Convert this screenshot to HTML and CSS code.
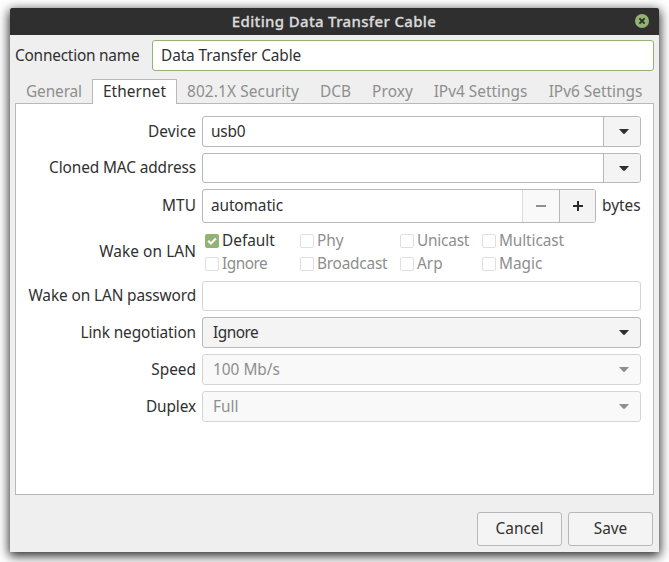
FILE: index.html
```html
<!DOCTYPE html>
<html lang="en">
<head>
<meta charset="utf-8">
<title>Editing Data Transfer Cable</title>
<link rel="stylesheet" href="styles.css">
</head>
<body>
<main class="window">
  <header class="titlebar">
    <h1 class="title">Editing Data Transfer Cable</h1>
    <svg class="close" width="14" height="14" viewBox="0 0 14 14"><circle cx="7" cy="7" r="7" fill="#92b372"/><path d="M4.4 4.4l5.2 5.2M9.6 4.4L4.4 9.6" stroke="#2f2f2f" stroke-width="1.9"/></svg>
  </header>
  <div class="name-row">
    <span class="name-label tighter">Connection name</span>
    <div class="box name-entry tight">Data Transfer Cable</div>
  </div>
  <nav class="tabs">
    <span class="tab first tight">General</span>
    <span class="tab active wide">Ethernet</span>
    <span class="tab security wider">802.1X Security</span>
    <span class="tab dcb">DCB</span>
    <span class="tab proxy wide">Proxy</span>
    <span class="tab ip">IPv4 Settings</span>
    <span class="tab ip">IPv6 Settings</span>
  </nav>
  <section class="panel">
    <div class="form">
      <span class="label wide">Device</span>
      <div class="box combo"><span class="value tighter">usb0</span><span class="drop"><svg width="10" height="5" viewBox="0 0 10 5"><path d="M0 0h10L6 4.5Q5 5.4 4 4.5z" fill="#2f2f2f"/></svg></span></div>
      <span class="label tight">Cloned MAC address</span>
      <div class="box combo"><span class="value"></span><span class="drop"><svg width="10" height="5" viewBox="0 0 10 5"><path d="M0 0h10L6 4.5Q5 5.4 4 4.5z" fill="#2f2f2f"/></svg></span></div>
      <span class="label wide">MTU</span>
      <div class="mtu">
        <div class="box spin"><span class="value tight">automatic</span>
          <span class="step off"><svg width="10" height="10" viewBox="0 0 10 10"><path d="M0 5h10" stroke="#8e8e8e" stroke-width="2"/></svg></span>
          <span class="step"><svg width="10" height="10" viewBox="0 0 10 10"><path d="M0 5h10M5 0v10" stroke="#2a2a2a" stroke-width="2"/></svg></span>
        </div>
        <span>bytes</span>
      </div>
      <span class="label wide">Wake on LAN</span>
      <div class="checks">
        <span class="check on"><i class="mark"><svg width="14" height="14" viewBox="0 0 14 14"><path d="M3.2 6.8l2.7 2.7 5-5" fill="none" stroke="#fff" stroke-width="2.1"/></svg></i>Default</span>
        <span class="check"><i class="mark"></i>Phy</span>
        <span class="check tighter"><i class="mark"></i>Unicast</span>
        <span class="check tight"><i class="mark"></i>Multicast</span>
        <span class="check tightest"><i class="mark"></i>Ignore</span>
        <span class="check tighter"><i class="mark"></i>Broadcast</span>
        <span class="check"><i class="mark"></i>Arp</span>
        <span class="check"><i class="mark"></i>Magic</span>
      </div>
      <span class="label tight">Wake on LAN password</span>
      <div class="box faded"></div>
      <span class="label tight">Link negotiation</span>
      <div class="box select"><span class="tightest">Ignore</span><svg width="10" height="5" viewBox="0 0 10 5"><path d="M0 0h10L6 4.5Q5 5.4 4 4.5z" fill="#2f2f2f"/></svg></div>
      <span class="label">Speed</span>
      <div class="box select faded"><span>100 Mb/s</span><svg width="10" height="5" viewBox="0 0 10 5"><path d="M0 0h10L6 4.5Q5 5.4 4 4.5z" fill="#8e8e8e"/></svg></div>
      <span class="label tight">Duplex</span>
      <div class="box select faded"><span>Full</span><svg width="10" height="5" viewBox="0 0 10 5"><path d="M0 0h10L6 4.5Q5 5.4 4 4.5z" fill="#8e8e8e"/></svg></div>
    </div>
  </section>
  <footer class="actions">
    <div class="box button">Cancel</div>
    <div class="box button">Save</div>
  </footer>
</main>
</body>
</html>
```
FILE: styles.css
```css
* { box-sizing: border-box; }
body {
  margin: 0;
  padding: 8px 10px 10px;
  height: 562px;
  overflow: hidden;
  background: #fff;
  color: #303030;
  font: 15.4px/20px "Noto Sans", sans-serif;
  white-space: nowrap;
}
svg { display: block; }
.tight { letter-spacing: -0.11px; }
.tighter { letter-spacing: -0.22px; }
.tightest { letter-spacing: -0.5px; }
.wide { letter-spacing: 0.08px; }
.wider { letter-spacing: 0.13px; }

.window {
  width: 649px;
  height: 544px;
  display: flex;
  flex-direction: column;
  background: #efefef;
  border-radius: 2px 2px 0 0;
  box-shadow: 0 3px 11px 1px rgba(0, 0, 0, 0.85);
}
.titlebar {
  height: 27px;
  display: grid;
  grid-template-columns: 1fr 24px;
  align-items: center;
  background: #2f2f2f;
  border-radius: 2px 2px 0 0;
}
.title {
  margin: -2px 0 0;
  padding-left: 23px;
  text-align: center;
  font-size: 15px;
  font-weight: 500;
  letter-spacing: 0.34px;
  color: #dadada;
  -webkit-text-stroke: 0.3px #dadada;
}
.close { margin: -1px 0 0; }

.box {
  display: flex;
  align-items: center;
  background: #fff;
  border: 1px solid #b8b8b8;
  border-radius: 3px;
}
.name-row {
  display: grid;
  grid-template-columns: 132px 1fr;
  gap: 5px;
  align-items: center;
  padding: 5px 5px 0;
}
.name-entry {
  height: 31px;
  padding-left: 8px;
  border-color: #92b372;
}

.tabs {
  display: flex;
  height: 25px;
  margin: 8px 5px -1px;
  padding-left: 1px;
  position: relative;
  color: #8e8e8e;
}
.tab {
  height: 25px;
  line-height: 26px;
  text-align: center;
  flex: none;
  width: 115px;
}
.first { width: 76px; }
.active {
  width: 85px;
  line-height: 24px;
  color: #303030;
  background: #fff;
  border: 1px solid #b8b8b8;
  border-bottom: 0;
}
.security { width: 132px; }
.dcb { width: 53px; }
.proxy { width: 61px; }

.panel {
  height: 392px;
  margin: 0 5px;
  padding: 12px 13px 0 12px;
  background: #fff;
  border: 1px solid #b8b8b8;
}
.form {
  display: grid;
  grid-template-columns: 168px 439px;
  grid-template-rows: 31px 30px 34px 46px 30px 31px 31px 31px;
  gap: 6px;
}
.label { justify-self: end; align-self: center; }
.combo, .spin { overflow: hidden; align-items: stretch; }
.value { flex: 1; align-self: center; padding-left: 8px; }
.drop, .step {
  display: flex;
  align-items: center;
  justify-content: center;
  width: 37px;
  background: #f4f4f4;
  border-left: 1px solid #b8b8b8;
}
.drop { padding-left: 4px; }
.step { width: 36px; }
.mtu { display: flex; align-items: center; gap: 6px; }
.spin { width: 394px; height: 34px; }
.step.off { width: 37px; background: #f9f9f9; border-left-color: #dcdcdc; }

.checks {
  display: grid;
  grid-template-columns: 95px 100px 82px 1fr;
  grid-template-rows: 23px 23px;
  padding-left: 3px;
}
.check { display: flex; align-items: center; gap: 3px; color: #8e8e8e; }
.on { color: #303030; }
.mark {
  width: 14px;
  height: 14px;
  background: #fff;
  border: 1px solid #dfdfdf;
  border-radius: 2px;
}
.on .mark { background: #92b372; border: 0; }
.select {
  justify-content: space-between;
  padding: 0 11px 0 10px;
  background: #f4f4f4;
}
.faded { border-color: #d5d5d5; color: #8e8e8e; }
.select.faded { background: #f9f9f9; }

.actions {
  display: flex;
  justify-content: flex-end;
  gap: 6px;
  padding: 17px 6px 0;
}
.button {
  width: 85px;
  height: 34px;
  justify-content: center;
  background: #f4f4f4;
}
```
